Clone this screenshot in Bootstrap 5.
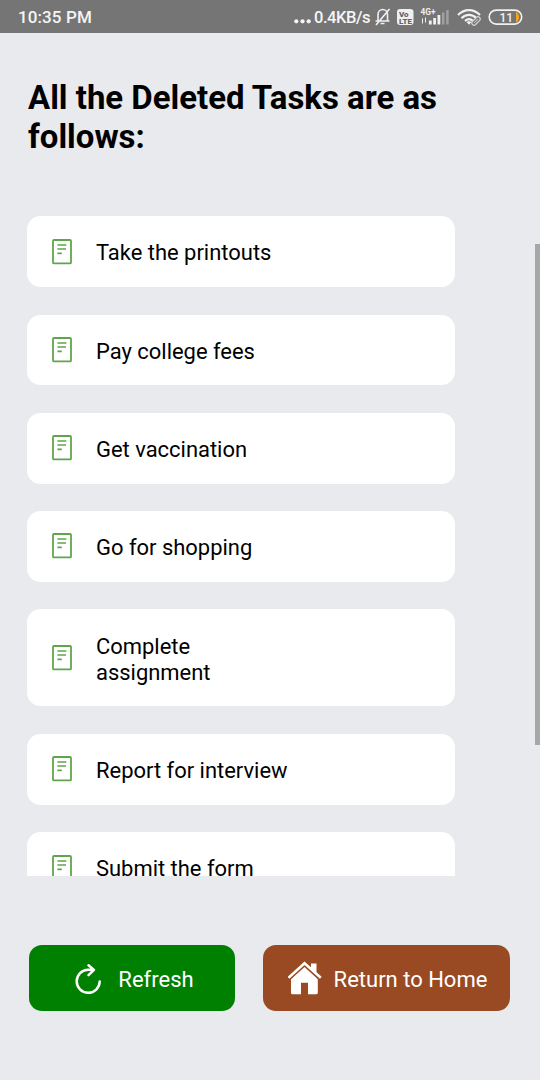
<!DOCTYPE html>
<html lang="en">
<head>
<meta charset="utf-8">
<meta name="viewport" content="width=device-width, initial-scale=1">
<title>Deleted Tasks</title>
<link href="https://cdn.jsdelivr.net/npm/bootstrap@5.3.0/dist/css/bootstrap.min.css" rel="stylesheet">
<style>
body { background:#e8eaed; color:#000; font-family:Roboto,"Liberation Sans",sans-serif; height:1080px; overflow:hidden; }
.status { height:33px; background:#757575; color:#f5f5f5; font-size:17px; font-weight:500; line-height:33px; padding:1px 17px 0 18px; }
.status svg { flex:none; }
.clock { letter-spacing:.1px; }
.rate { font-size:16.5px; letter-spacing:-.45px; margin-left:1px; }
.title { font-size:32.95px; line-height:38.5px; font-weight:700; margin:46px 0 0 28px; height:77px; width:430px; }
.tasks { height:660px; margin:60.3px 85.5px 0 27px; gap:27.6px; }
.task { flex:none; border-radius:13.5px; padding:22.2px 25px 22.2px 24.6px; font-size:21.95px; line-height:26.3px; }
.task-text { max-width:192px; margin-left:24.4px; position:relative; top:2px; }
.actions { margin:68.7px 29.8px 0 29.2px; gap:27.5px; }
.act { height:66px; border-radius:13px; font-size:22px; color:#fff; }
.act span { padding-top:3.2px; }
.act-refresh { width:206px; background:#008000; padding:0 0 0 4.6px; }
.act-refresh span { margin-left:15px; }
.act-home { width:247.5px; background:#9a4a23; padding:0 0 0 2.6px; }
.act-home span { margin-left:10.5px; }
.thumb { right:0; top:244.3px; width:5.5px; height:501px; background:#a6a7a9; }
</style>
</head>
<body class="position-relative">
<svg class="d-none">
  <symbol id="doc" viewBox="0 0 20 26">
    <rect x="1" y="1" width="18" height="23.4" rx="1" fill="none" stroke="#5fa64b" stroke-width="1.8"/>
    <path d="M5.4 6h9M5.4 10h8.6M5.4 14.300h4.400" fill="none" stroke="#5fa64b" stroke-width="1.7"/>
  </symbol>
</svg>
<header class="status d-flex align-items-center justify-content-between">
  <span class="clock">10:35 PM</span>
  <div class="d-flex align-items-center">
    <svg width="19" height="24" viewBox="0 -.8 19 24" fill="#f5f5f5"><circle cx="2.3" cy="15.5" r="2.1"/><circle cx="8.5" cy="15.5" r="2.1"/><circle cx="14.7" cy="15.5" r="2.1"/></svg>
    <span class="rate">0.4KB/s</span>
    <svg width="153" height="33" viewBox="370 .5 153 33" fill="none" stroke="#f0f0f0">
      <path d="M375.5 20.5h14M378 20.5v-6.200c0-7 9.500-7 9.500 0v6.200M376 24.500 389.500 8.500M380.500 23h4" stroke-width="1.6"/>
      <rect x="397" y="8.500" width="16.500" height="16" rx="3" fill="#f0f0f0" stroke="none"/>
      <g fill="#656565" stroke="none" font-family="Roboto" font-weight="900"><text x="399" y="16" font-size="8">Vo</text><text x="399" y="23.300" font-size="7.500" textLength="13" lengthAdjust="spacingAndGlyphs">LTE</text></g>
      <text x="420.500" y="14" font-family="Roboto" font-size="8.500" font-weight="700" fill="#f0f0f0" stroke="none" textLength="15" lengthAdjust="spacingAndGlyphs">4G+</text>
      <path d="M422.500 18v5M425.500 17v5" stroke-width="1"/>
      <path d="M430.300 20v4M434.600 17.500v6.500M438.900 14.500v9.500" stroke-width="2.800"/>
      <path d="M443.200 12v12M447.400 9.500v14.500" stroke-width="2.500" stroke="#a0a0a0"/>
      <path d="M458 14.500c6.500-6.500 15.500-6.500 22 0M461.500 17.800c4.500-4.500 10.500-4.500 15 0M465 20.500c2.500-2.400 5.500-2.400 8 0" stroke-width="2.200"/>
      <path d="m466.500 21.500 2.500-1 2.500 1-2.500 2.700z" fill="#f0f0f0" stroke="none"/>
      <g transform="rotate(-45 476 20.500)"><rect x="471" y="18.300" width="10" height="4.400" rx="2.200" fill="#757575" stroke="#d4d4d4" stroke-width="1.200"/><path d="M473.500 20.500h5" stroke-width="1" stroke="#d4d4d4"/></g>
      <rect x="489.200" y="9.600" width="32.500" height="14" rx="7" stroke-width="1.600"/>
      <path d="M516 11.500c4 1.500 4 9 0 10.500z" fill="#f5a51d" stroke="none"/>
      <text x="499.500" y="21" font-family="Roboto" font-size="12" font-weight="500" fill="#f0f0f0" stroke="none">11</text>
    </svg>
  </div>
</header>
<h1 class="title">All the Deleted Tasks are as follows:</h1>
<main class="tasks d-flex flex-column overflow-hidden">
  <div class="task bg-white d-flex align-items-center"><svg width="20" height="26"><use href="#doc"/></svg><span class="task-text">Take the printouts</span></div>
  <div class="task bg-white d-flex align-items-center"><svg width="20" height="26"><use href="#doc"/></svg><span class="task-text">Pay college fees</span></div>
  <div class="task bg-white d-flex align-items-center"><svg width="20" height="26"><use href="#doc"/></svg><span class="task-text">Get vaccination</span></div>
  <div class="task bg-white d-flex align-items-center"><svg width="20" height="26"><use href="#doc"/></svg><span class="task-text">Go for shopping</span></div>
  <div class="task bg-white d-flex align-items-center"><svg width="20" height="26"><use href="#doc"/></svg><span class="task-text">Complete assignment</span></div>
  <div class="task bg-white d-flex align-items-center"><svg width="20" height="26"><use href="#doc"/></svg><span class="task-text text-nowrap">Report for interview</span></div>
  <div class="task bg-white d-flex align-items-center"><svg width="20" height="26"><use href="#doc"/></svg><span class="task-text">Submit the form</span></div>
</main>
<footer class="actions d-flex">
  <button class="act act-refresh border-0 d-flex align-items-center justify-content-center">
    <svg width="28" height="34" viewBox="75 961 28 34" fill="none" stroke="#fff" stroke-width="2.500" stroke-linecap="round" stroke-linejoin="round"><path d="M99.700 981.500a11.500 11.500 0 1 1-11.500-11.700h5.500M88.500 965.300l5.500 4.600-5.500 5.200"/></svg>
    <span>Refresh</span>
  </button>
  <button class="act act-home border-0 d-flex align-items-center justify-content-center">
    <svg width="35" height="34" viewBox="288.500 961.300 35 34" fill="#fff"><path d="M305 966.500 291.500 979v14q0 1.500 1.500 1.500h8.500V983h7v11.500h8q1.800 0 1.800-1.500v-14z"/><path d="m289 978.500 16-14.500 16 14.500" fill="none" stroke="#9a4a23" stroke-width="5"/><path d="m289 978 16-14.500 16.300 14.500" fill="none" stroke="#fff" stroke-width="2.600"/><path d="M311.500 963.700h5.500v9.500l-5.500-5z"/></svg>
    <span>Return to Home</span>
  </button>
</footer>
<div class="thumb position-absolute"></div>
<script src="https://cdn.jsdelivr.net/npm/bootstrap@5.3.0/dist/js/bootstrap.bundle.min.js"></script>
</body>
</html>
